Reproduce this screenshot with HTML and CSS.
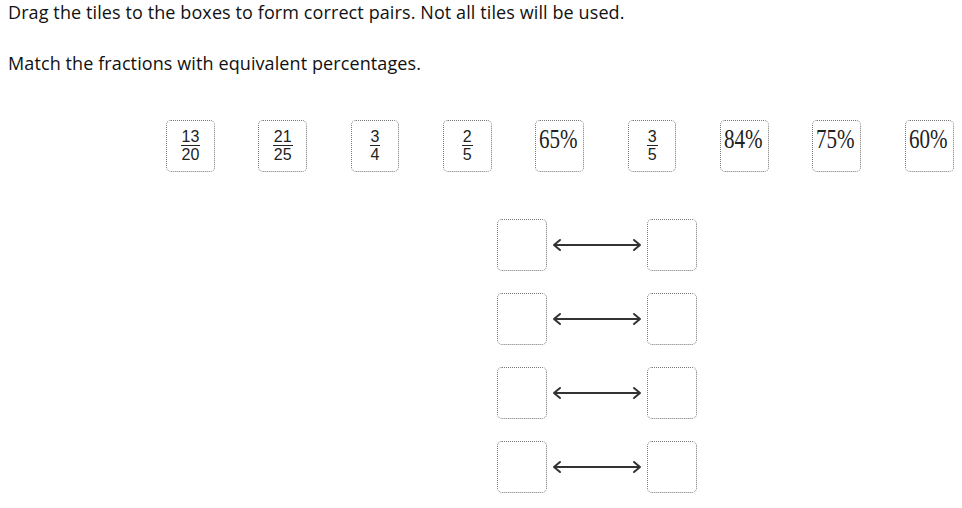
FILE: index.html
```html
<!DOCTYPE html>
<html>
<head>
<meta charset="utf-8">
<link rel="stylesheet" href="styles.css">
</head>
<body>
<p class="instr first">Drag the tiles to the boxes to form correct pairs. Not all tiles will be used.</p>
<p class="instr second">Match the fractions with equivalent percentages.</p>
<div class="tiles">
  <div class="tile"><span class="frac"><span class="num">13</span><span class="den">20</span></span></div>
  <div class="tile"><span class="frac"><span class="num">21</span><span class="den">25</span></span></div>
  <div class="tile"><span class="frac"><span class="num">3</span><span class="den">4</span></span></div>
  <div class="tile"><span class="frac"><span class="num">2</span><span class="den">5</span></span></div>
  <div class="tile pct"><span class="pv">65%</span></div>
  <div class="tile"><span class="frac"><span class="num">3</span><span class="den">5</span></span></div>
  <div class="tile pct"><span class="pv">84%</span></div>
  <div class="tile pct"><span class="pv">75%</span></div>
  <div class="tile pct"><span class="pv">60%</span></div>
</div>
<div class="pairs">
  <div class="pair"><div class="box"></div><svg class="arrow" width="90" height="14" viewBox="0 0 90 14"><path d="M2 7H88M8 2L2 7L8 12M82 2L88 7L82 12" fill="none" stroke="#333" stroke-width="2" stroke-linecap="round" stroke-linejoin="round"/></svg><div class="box"></div></div>
  <div class="pair"><div class="box"></div><svg class="arrow" width="90" height="14" viewBox="0 0 90 14"><path d="M2 7H88M8 2L2 7L8 12M82 2L88 7L82 12" fill="none" stroke="#333" stroke-width="2" stroke-linecap="round" stroke-linejoin="round"/></svg><div class="box"></div></div>
  <div class="pair"><div class="box"></div><svg class="arrow" width="90" height="14" viewBox="0 0 90 14"><path d="M2 7H88M8 2L2 7L8 12M82 2L88 7L82 12" fill="none" stroke="#333" stroke-width="2" stroke-linecap="round" stroke-linejoin="round"/></svg><div class="box"></div></div>
  <div class="pair"><div class="box"></div><svg class="arrow" width="90" height="14" viewBox="0 0 90 14"><path d="M2 7H88M8 2L2 7L8 12M82 2L88 7L82 12" fill="none" stroke="#333" stroke-width="2" stroke-linecap="round" stroke-linejoin="round"/></svg><div class="box"></div></div>
</div>
</body>
</html>
```
FILE: styles.css
```css
body {
  margin: 0;
  padding: 0 8px;
  background: #fff;
  color: #111;
  font-family: "Open Sans", "Noto Sans", sans-serif;
}
.instr {
  margin: 0;
  font-size: 18px;
  line-height: 24px;
  letter-spacing: 0.1px;
}
.second { margin-top: 27px; }
.tiles {
  display: flex;
  gap: 43.5px;
  margin-top: 45px;
  margin-left: 158px;
}
.tile {
  box-sizing: border-box;
  width: 49px;
  height: 52px;
  border: 1px dotted #777;
  border-radius: 5px;
  display: flex;
  align-items: center;
  justify-content: center;
  color: #222;
}
.frac {
  display: flex;
  flex-direction: column;
  align-items: center;
  font-family: "Liberation Sans", Arial, sans-serif;
  font-size: 16px;
  line-height: 14px;
}
.num {
  padding: 0 1px 1px;
  border-bottom: 1.5px solid #222;
}
.den { padding-top: 2px; }
.pct {
  align-items: flex-start;
  justify-content: flex-start;
  padding: 3px 0 0 3px;
}
.pv {
  display: inline-block;
  font-family: "Liberation Serif", "Times New Roman", serif;
  font-size: 27px;
  line-height: 30px;
  transform: scaleX(0.78);
  transform-origin: left center;
  white-space: nowrap;
}
.pairs {
  display: flex;
  flex-direction: column;
  gap: 22px;
  margin-top: 47px;
  margin-left: 489px;
}
.pair {
  display: flex;
  align-items: center;
}
.box {
  box-sizing: border-box;
  width: 50px;
  height: 52px;
  border: 1px dotted #777;
  border-radius: 5px;
}
.arrow {
  margin: 0 5px 0 5px;
}
```
